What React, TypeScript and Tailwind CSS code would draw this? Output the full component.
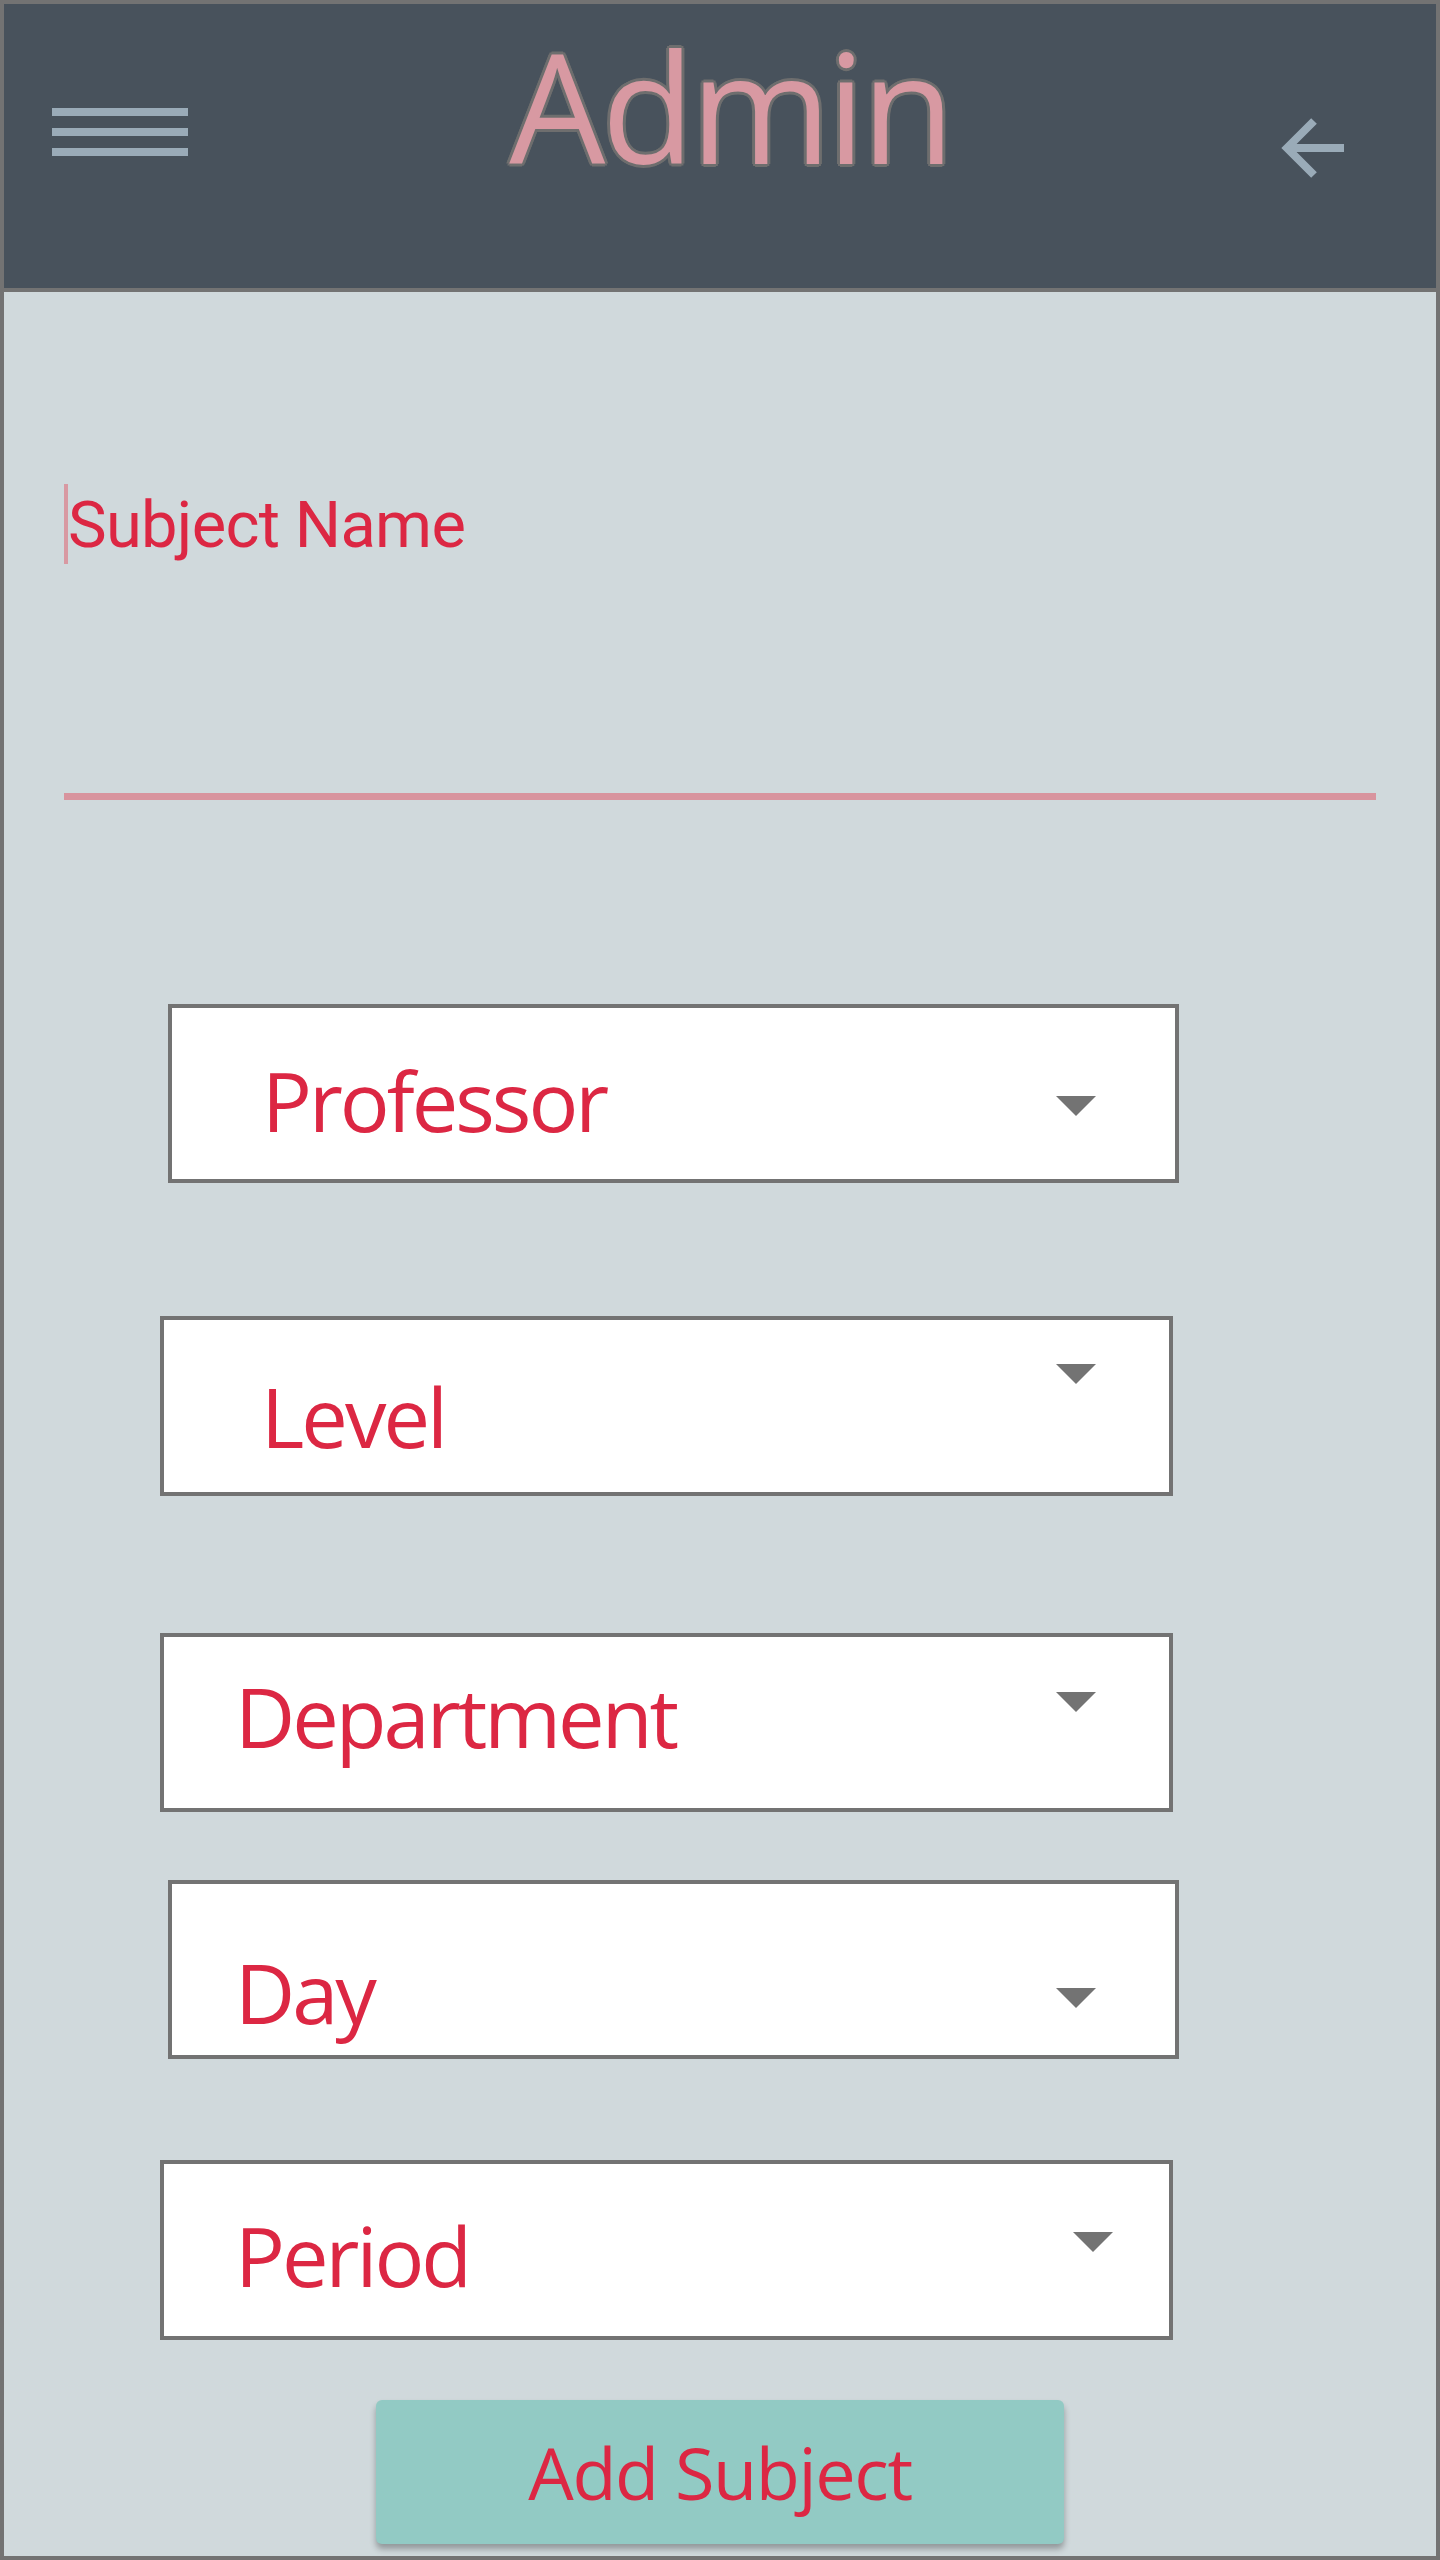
import React from "react"

type Field = {
  label: string
  box: string
  text: string
  arrow: string
}

const fields: Field[] = [
  { label: "Professor", box: "mt-[204px] ml-[164px] w-[1011px] h-[179px]", text: "mt-[50px] ml-[90px]", arrow: "mt-[88px] mr-[79px]" },
  { label: "Level", box: "mt-[133px] ml-[156px] w-[1013px] h-[180px]", text: "mt-[54px] ml-[97px]", arrow: "mt-[44px] mr-[73px]" },
  { label: "Department", box: "mt-[137px] ml-[156px] w-[1013px] h-[179px]", text: "mt-[37px] ml-[71px]", arrow: "mt-[55px] mr-[73px]" },
  { label: "Day", box: "mt-[68px] ml-[164px] w-[1011px] h-[179px]", text: "mt-[66px] ml-[63px]", arrow: "mt-[104px] mr-[79px]" },
  { label: "Period", box: "mt-[101px] ml-[156px] w-[1013px] h-[180px]", text: "mt-[49px] ml-[71px]", arrow: "mt-[68px] mr-[56px]" },
]

function Select({ field }: { field: Field }) {
  return (
    <div className={`flex items-start bg-white border-4 border-[#737373] ${field.box}`}>
      <span className={`font-['Open_Sans',sans-serif] text-[83px] leading-none tracking-[-3px] text-[#dc2743] ${field.text}`}>
        {field.label}
      </span>
      <div
        className={`ml-auto w-0 h-0 border-l-[20px] border-r-[20px] border-t-[20px] border-l-transparent border-r-transparent border-t-[#737373] ${field.arrow}`}
      />
    </div>
  )
}

export default function App() {
  return (
    <div className="w-[1440px] h-[2560px] border-4 border-[#737373] bg-[#d0d9dc] flex flex-col">
      {/* top bar */}
      <div className="h-[288px] shrink-0 bg-[#48525c] border-b-4 border-[#737373] flex items-start">
        <div className="ml-[48px] mt-[104px] flex flex-col gap-[12px]">
          <div className="w-[136px] h-[8px] bg-[#9aabb8]" />
          <div className="w-[136px] h-[8px] bg-[#9aabb8]" />
          <div className="w-[136px] h-[8px] bg-[#9aabb8]" />
        </div>
        <div className="flex-1 flex justify-center mt-[26px] pr-[6px]">
          <span className="font-['Open_Sans',sans-serif] font-normal text-[152px] leading-none tracking-[-4px] text-[#d899a2] [text-shadow:3px_0_#6e6e6e,-3px_0_#6e6e6e,0_3px_#6e6e6e,0_-3px_#6e6e6e,2px_2px_#6e6e6e,-2px_-2px_#6e6e6e,2px_-2px_#6e6e6e,-2px_2px_#6e6e6e]">
            Admin
          </span>
        </div>
        <svg className="mt-[110px] mr-[92px]" width="66" height="68" viewBox="0 0 66 68" fill="none">
          <polyline points="36,7 9,34 36,61" stroke="#9aabb8" strokeWidth="8" />
          <line x1="9" y1="34" x2="66" y2="34" stroke="#9aabb8" strokeWidth="8" />
        </svg>
      </div>

      {/* subject name input */}
      <div className="mt-[192px] ml-[60px] flex items-start">
        <div className="w-[4px] h-[80px] bg-[#d899a2]" />
        <span className="mt-[9px] font-['Roboto',sans-serif] text-[65px] leading-none tracking-[-0.7px] text-[#dc2743]">
          Subject Name
        </span>
      </div>
      <div className="mt-[229px] ml-[60px] w-[1312px] h-[7px] bg-[#d8949e]" />

      {fields.map((f) => (
        <Select key={f.label} field={f} />
      ))}

      <button className="mt-[60px] ml-[372px] w-[688px] h-[144px] rounded-[6px] bg-[#92cac4] shadow-[0_5px_6px_rgba(0,0,0,0.3)] flex items-center justify-center">
        <span className="font-['Open_Sans',sans-serif] text-[72px] leading-none tracking-[-1.4px] text-[#dc2743]">
          Add Subject
        </span>
      </button>
    </div>
  )
}
